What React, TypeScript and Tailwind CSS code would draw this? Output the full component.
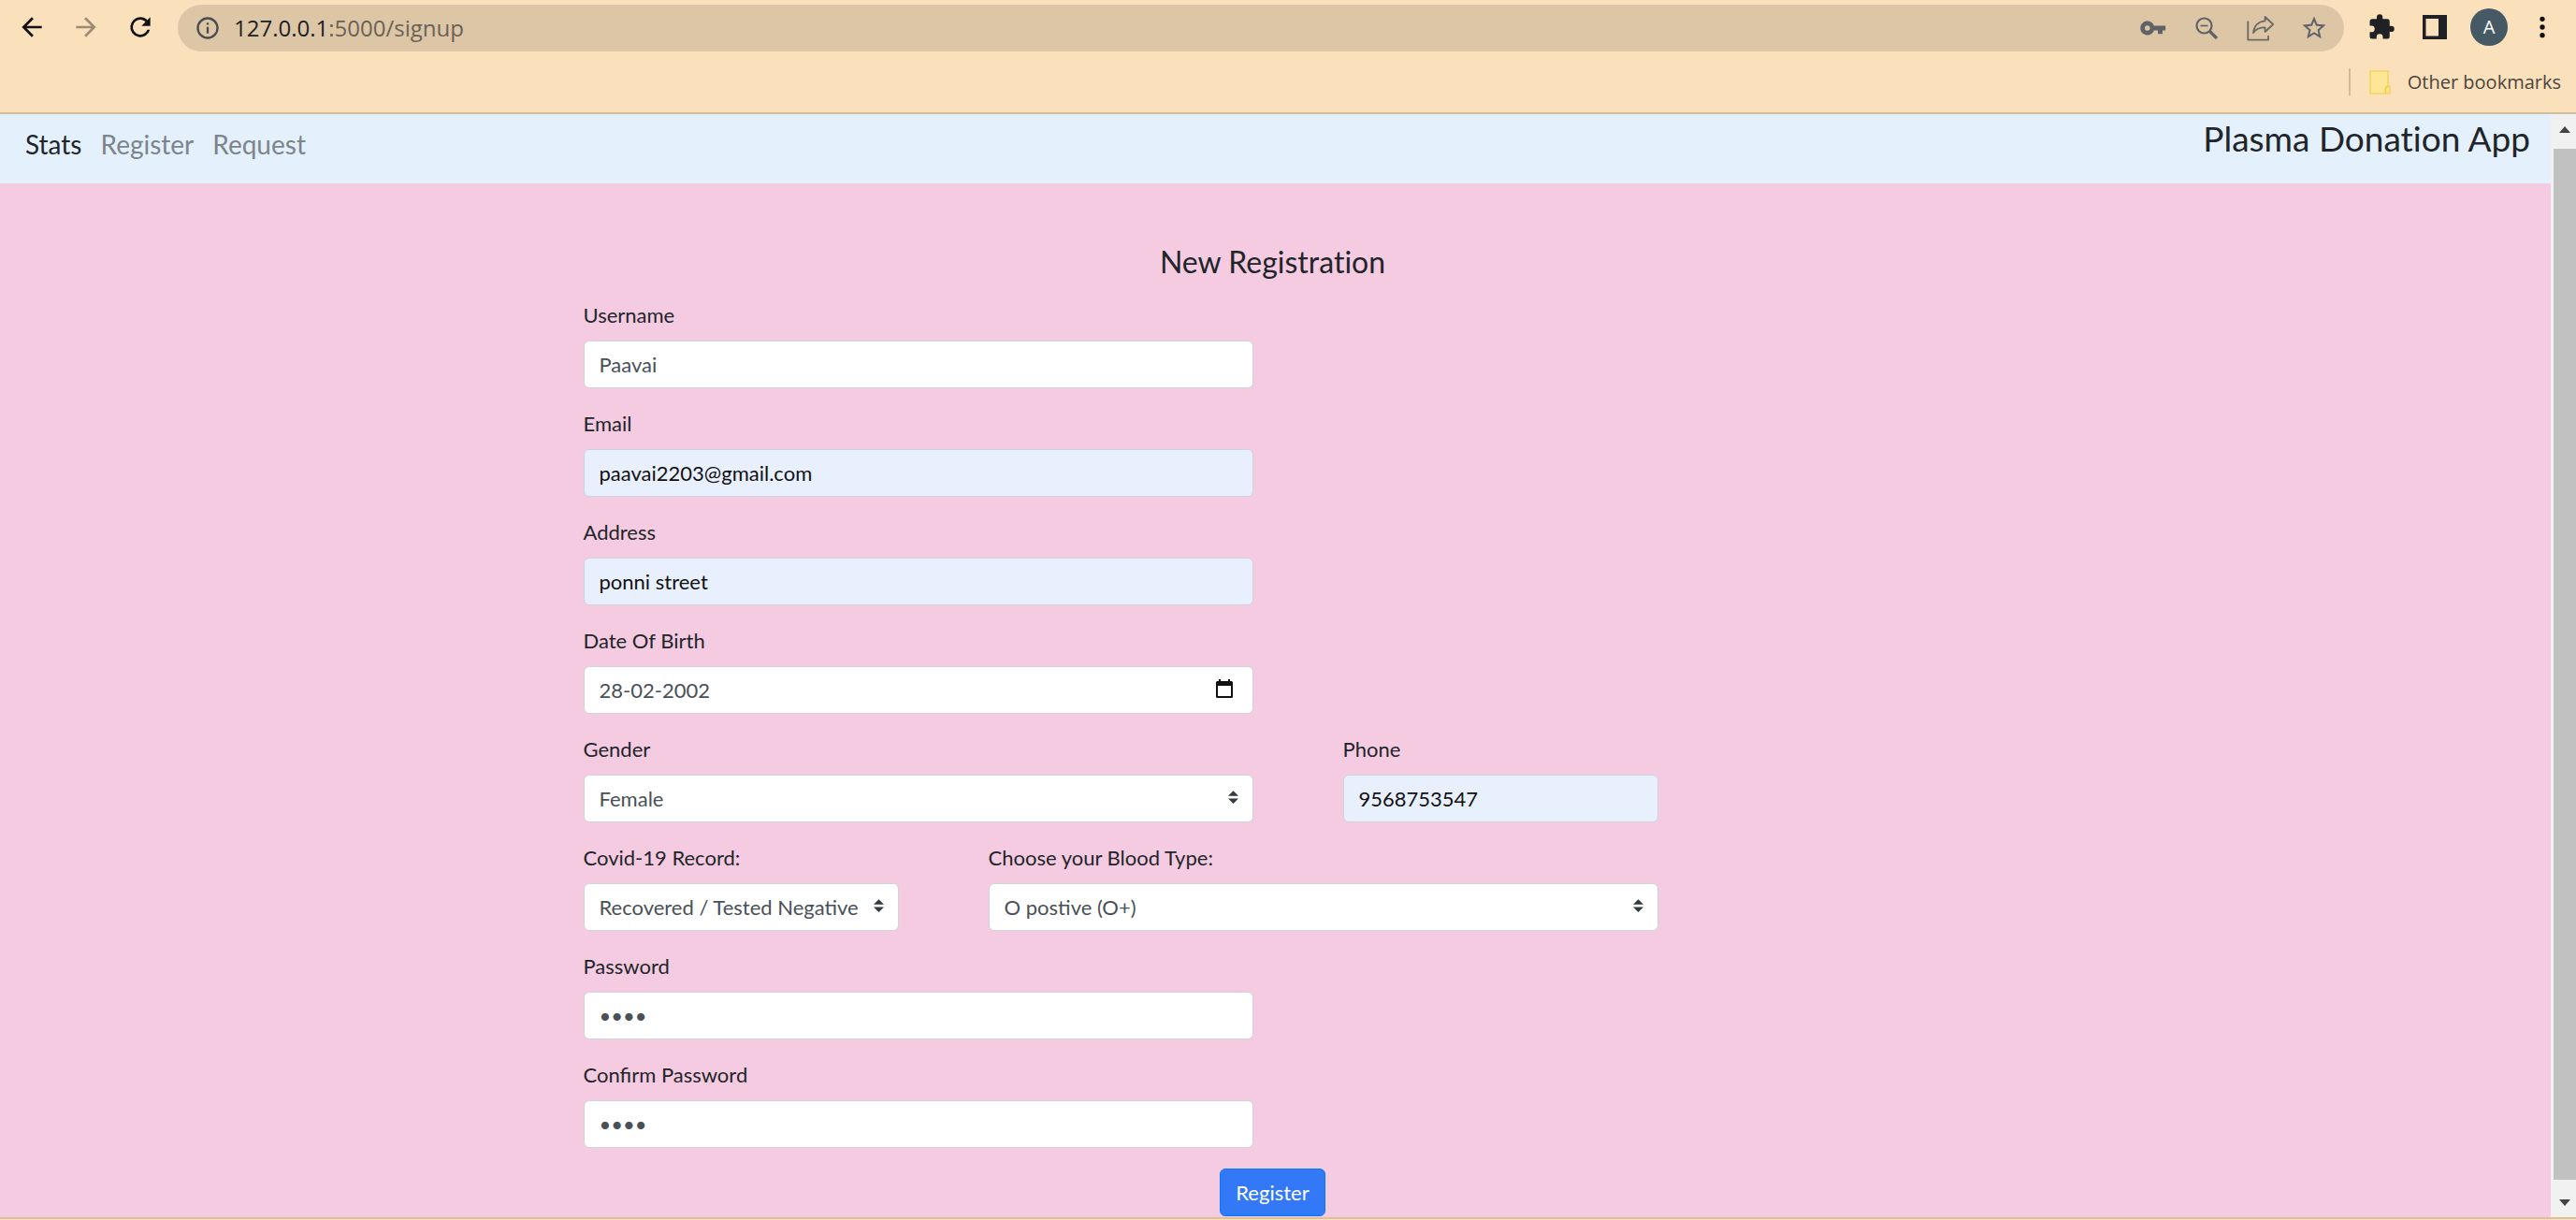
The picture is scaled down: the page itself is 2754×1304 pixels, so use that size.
import type { InputHTMLAttributes, ReactNode } from "react";

const controlBase =
  "block h-[51px] w-full rounded-md border border-[#ced4da] px-4 text-[22px] outline-none";
const plain = "bg-white text-[#495057]";
const autofilled = "bg-[#e8f0fe] text-[#111111]";

const wide = "w-[716px] max-w-full";
const narrow = "w-[337px] max-w-full";

function Field({
  id,
  label,
  width = wide,
  children,
}: {
  id: string;
  label: string;
  width?: string;
  children: ReactNode;
}) {
  return (
    <div className={width}>
      <label htmlFor={id} className="mb-[11px] block text-[22px] leading-8">
        {label}
      </label>
      {children}
    </div>
  );
}

function TextBox({
  filled = false,
  ...props
}: InputHTMLAttributes<HTMLInputElement> & { filled?: boolean }) {
  return <input {...props} className={`${controlBase} ${filled ? autofilled : plain}`} />;
}

function SelectBox({ id, options }: { id: string; options: string[] }) {
  return (
    <div className="relative">
      <select id={id} className={`${controlBase} ${plain} appearance-none pr-9`}>
        {options.map((o) => (
          <option key={o}>{o}</option>
        ))}
      </select>
      <svg
        viewBox="0 0 4 5"
        className="pointer-events-none absolute top-[17px] right-4 h-[14px] w-[11px]"
        fill="#343a40"
        aria-hidden="true"
      >
        <path d="M2 0 0 2h4zM2 5 0 3h4z" />
      </svg>
    </div>
  );
}

function Icon({ d, className = "size-8", fill = "#5f6368" }: { d: string; className?: string; fill?: string }) {
  return (
    <svg viewBox="0 0 24 24" className={className} fill={fill} aria-hidden="true">
      <path d={d} />
    </svg>
  );
}

function Toolbar() {
  return (
    <div className="flex h-[55px] items-end">
      <div className="flex h-[52px] items-center gap-[26px] pl-[18px]">
        <button aria-label="Back">
          <Icon fill="#111111" d="M20 11H7.83l5.59-5.59L12 4l-8 8 8 8 1.41-1.41L7.83 13H20z" />
        </button>
        <button aria-label="Forward">
          <Icon fill="#9c8c76" d="M12 4l-1.41 1.41L16.17 11H4v2h12.17l-5.58 5.59L12 20l8-8z" />
        </button>
        <button aria-label="Reload">
          <Icon
            fill="#111111"
            d="M17.65 6.35A7.96 7.96 0 0 0 12 4a8 8 0 1 0 7.73 10h-2.08A6 6 0 1 1 12 6c1.66 0 3.14.69 4.22 1.78L13 11h7V4z"
          />
        </button>
      </div>
      <div className="ml-6 flex h-[50px] flex-1 items-center rounded-full bg-[#ddc6a6] pr-[17px] pl-[18px]">
        <Icon
          className="size-7 shrink-0"
          fill="#494c50"
          d="M11 7h2v2h-2zm0 4h2v6h-2zm1-9a10 10 0 1 0 0 20 10 10 0 0 0 0-20zm0 18a8 8 0 1 1 0-16 8 8 0 0 1 0 16z"
        />
        <div role="textbox" aria-label="Address bar" className="ml-[14px] flex-1 text-[24px] text-[#6b6256]">
          <span className="text-[#202124]">127.0.0.1</span>:5000/signup
        </div>
        <div className="flex items-center gap-[26px]">
          <button aria-label="Saved passwords">
            <Icon d="M12.65 10a6 6 0 1 0 0 4H16v3h4v-3h2.5v-4zM7 14.2a2.2 2.2 0 1 1 0-4.4 2.2 2.2 0 0 1 0 4.4z" className="size-[30px]" />
          </button>
          <button aria-label="Zoom" className="flex w-8 justify-center">
            <svg viewBox="0 0 26 26" className="size-[26px]" fill="none" stroke="#5f6368" aria-hidden="true">
              <circle cx="10.500" cy="10.500" r="8" strokeWidth="2.200" />
              <path d="M6.500 10.500h8" strokeWidth="1.600" />
              <path d="m16.500 16.500 7.500 7.500" strokeWidth="3.200" />
            </svg>
          </button>
          <button aria-label="Share">
            <svg viewBox="0 0 28 28" className="h-8 w-8" fill="none" stroke="#6d6a65" strokeWidth="1.6" strokeLinejoin="round" aria-hidden="true">
              <path d="M2 7.500v17.500h19v-4" />
              <path d="M18 3.500 25.500 10.500 18 17.500v-4c-5 0-8.500 1.300-11 4.900.8-6 4.500-10.400 11-11z" />
            </svg>
          </button>
          <button aria-label="Bookmark this page">
            <Icon d="m22 9.24-7.19-.62L12 2 9.190 8.630 2 9.240l5.460 4.730L5.820 21 12 17.270 18.180 21l-1.630-7.030zM12 15.400l-3.760 2.270 1-4.280-3.320-2.880 4.380-.38L12 6.100l1.710 4.040 4.380.38-3.320 2.880 1 4.280z" className="size-[30px]" />
          </button>
        </div>
      </div>
      <div className="flex h-[52px] items-center pr-5 pl-[25px]">
        <button aria-label="Extensions">
          <Icon fill="#202124" d="M20.500 11H19V7a2 2 0 0 0-2-2h-4V3.500a2.500 2.500 0 0 0-5 0V5H4a2 2 0 0 0-1.990 2v3.800H3.500a2.700 2.700 0 0 1 0 5.400H2V20a2 2 0 0 0 2 2h3.800v-1.500a2.700 2.700 0 0 1 5.400 0V22H17a2 2 0 0 0 2-2v-4h1.500a2.500 2.500 0 0 0 0-5z" className="size-[30px]" />
        </button>
        <button aria-label="Side panel" className="ml-[29px]">
          <svg viewBox="0 0 26 26" className="size-[26px]" aria-hidden="true">
            <path fill="#202124" fillRule="evenodd" d="M0 0h26v26H0zM3.500 4v18.500H17V4z" />
          </svg>
        </button>
        <button
          aria-label="Profile"
          className="ml-[25px] flex size-10 items-center justify-center rounded-full bg-[#455a64] text-xl text-white"
        >
          A
        </button>
        <button aria-label="Menu" className="ml-[21px]">
          <Icon fill="#111111" d="M12 7.500a2 2 0 1 0 0-4 2 2 0 0 0 0 4zm0 6.500a2 2 0 1 0 0-4 2 2 0 0 0 0 4zm0 6.500a2 2 0 1 0 0-4 2 2 0 0 0 0 4z" />
        </button>
      </div>
    </div>
  );
}

function Bookmarks() {
  return (
    <div className="flex h-[65px] items-center justify-end pr-4">
      <span className="h-[29px] w-0.5 bg-[#d3bc9c]" />
      <a href="#bookmarks" className="ml-5 flex items-center gap-[18px] text-xl text-[#4a443c]">
        <svg viewBox="0 0 23 26" className="h-[26px] w-[23px]" aria-hidden="true">
          <path d="M1 1h19v16h2v8H1z" fill="#fde695" stroke="#f3d45f" strokeWidth="1.500" />
          <path d="M17.500 25v-5q0-2.500 2.500-2.500" fill="none" stroke="#efcb4b" strokeWidth="1.500" />
        </svg>
        Other bookmarks
      </a>
    </div>
  );
}

function ScrollBar() {
  return (
    <div className="flex w-[27px] shrink-0 flex-col items-end bg-[#f1f1f1]" aria-hidden="true">
      <div className="flex h-[37px] w-6 items-center justify-center pb-1">
        <svg viewBox="0 0 12 7" className="h-[7px] w-3" fill="#444444">
          <path d="M6 0 12 7H0z" />
        </svg>
      </div>
      <div className="w-6 flex-1 bg-[#c1c1c1]" />
      <div className="flex h-10 w-6 items-center justify-center pt-2">
        <svg viewBox="0 0 12 7" className="h-[7px] w-3" fill="#444444">
          <path d="M6 7 12 0H0z" />
        </svg>
      </div>
    </div>
  );
}

function SignupForm() {
  return (
    <form
      className="mx-auto max-w-[1480px] pt-[62px] pr-1.5"
      onSubmit={(e) => e.preventDefault()}
    >
      <h1 className="text-center text-[32px] leading-[44px] font-normal [font-variant-ligatures:none]">
        New Registration
      </h1>
      <div className="mt-[19px] flex flex-col gap-[22px]">
        <Field id="username" label="Username">
          <TextBox id="username" defaultValue="Paavai" />
        </Field>
        <Field id="email" label="Email">
          <TextBox id="email" type="email" filled defaultValue="paavai2203@gmail.com" />
        </Field>
        <Field id="address" label="Address">
          <TextBox id="address" filled defaultValue="ponni street" />
        </Field>
        <Field id="dob" label="Date Of Birth">
          <div className="relative">
            <TextBox id="dob" inputMode="numeric" defaultValue="28-02-2002" />
            <button type="button" aria-label="Open calendar" className="absolute top-[14px] right-[22px]">
              <svg viewBox="0 0 18 20" className="h-5 w-[18px]" aria-hidden="true">
                <path
                  fill="#111111"
                  fillRule="evenodd"
                  d="M3 0h2v2h8V0h2v2h1.500Q18 2 18 3.500v15q0 1.500-1.500 1.500h-15Q0 20 0 18.500v-15Q0 2 1.500 2H3zM2 7v11h14V7z"
                />
              </svg>
            </button>
          </div>
        </Field>
        <div className="flex flex-wrap gap-x-[96px] gap-y-[22px]">
          <Field id="gender" label="Gender">
            <SelectBox id="gender" options={["Female", "Male", "Other"]} />
          </Field>
          <Field id="phone" label="Phone" width={narrow}>
            <TextBox id="phone" type="tel" filled defaultValue="9568753547" />
          </Field>
        </div>
        <div className="flex flex-wrap gap-x-[96px] gap-y-[22px]">
          <Field id="covid" label="Covid-19 Record:" width={narrow}>
            <SelectBox id="covid" options={["Recovered / Tested Negative", "Tested Positive"]} />
          </Field>
          <Field id="blood" label="Choose your Blood Type:">
            <SelectBox id="blood" options={["O postive (O+)", "O negative (O-)", "A postive (A+)"]} />
          </Field>
        </div>
        <Field id="password" label="Password">
          <TextBox id="password" type="password" defaultValue="0000" />
        </Field>
        <Field id="confirm" label="Confirm Password">
          <TextBox id="confirm" type="password" defaultValue="0000" />
        </Field>
        <button
          type="submit"
          className="h-[51px] self-center rounded-md border border-[#007bff] bg-[#3379f7] px-4 text-[22px] text-white"
        >
          Register
        </button>
      </div>
    </form>
  );
}

export default function App() {
  return (
    <div className="flex min-h-screen flex-col bg-[#fbe0bc] pb-px font-['Open_Sans',sans-serif]">
      <header className="border-b-2 border-[#d3bda0]">
        <Toolbar />
        <Bookmarks />
      </header>
      <div className="flex flex-1 border-b-2 border-[#dcc09a] font-['Lato',sans-serif] text-[#212529]">
        <div className="min-w-0 flex-1 bg-[#f5cbe2]">
          <nav className="flex h-[74px] items-start justify-between bg-[#e4f1fd] pr-[22px] pl-[27px] [font-variant-ligatures:none]">
            <div className="flex gap-5 pt-3 text-[28px] leading-10 text-[#7d848b]">
              <a href="#stats" className="text-[#212529]">Stats</a>
              <a href="#register">Register</a>
              <a href="#request">Request</a>
            </div>
            <a href="#home" className="pt-0.5 text-[37px] leading-[48px]">Plasma Donation App</a>
          </nav>
          <main>
            <SignupForm />
          </main>
        </div>
        <ScrollBar />
      </div>
    </div>
  );
}
